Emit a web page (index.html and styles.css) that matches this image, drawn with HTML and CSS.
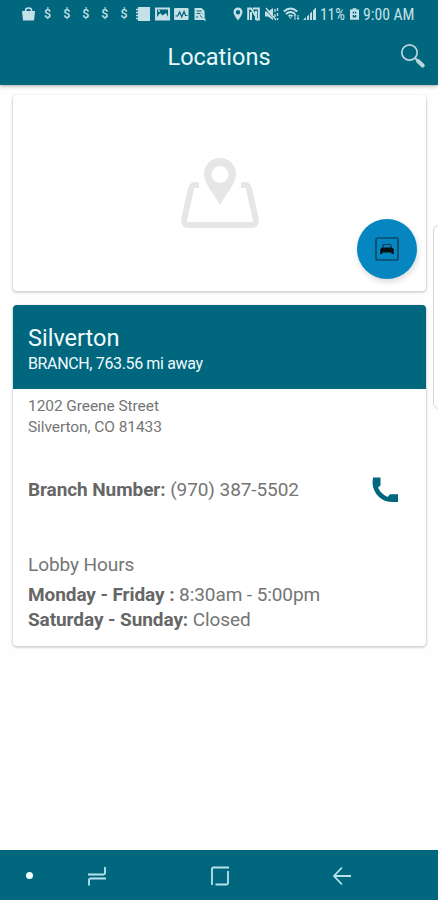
FILE: index.html
```html
<!DOCTYPE html>
<html lang="en">
<head>
    <meta charset="UTF-8">
    <meta name="viewport" content="width=device-width, initial-scale=1.0">
    <title>Locations</title>
    <link rel="stylesheet" href="styles.css">
</head>
<body>
    <header class="top">
        <div class="status-bar">
            <div class="notifications">
                <svg viewBox="0 0 19 16"><path d="M3 5h13l-1 9.500H4z" fill="currentColor"/><path d="M6.500 7V4.500q0-2.500 3-2.500t3 2.500V7" fill="none" stroke="currentColor" stroke-width="1.500"/></svg>
                <span>$</span>
                <span>$</span>
                <span>$</span>
                <span>$</span>
                <span>$</span>
                <svg viewBox="0 0 19 16"><path d="M4 1h12v14H4z" fill="currentColor"/><path d="M2 3.500h4M2 6.500h4M2 9.500h4M2 12.500h4" stroke="currentColor" stroke-width="1.300"/></svg>
                <svg viewBox="0 0 19 16"><rect x="3" y="2.500" width="13" height="11" fill="none" stroke="currentColor" stroke-width="2"/><path d="M4 11l3-4 2.500 2.500L13 7l2 4v2H4z" fill="currentColor"/><circle cx="6" cy="5" r="1" fill="currentColor"/></svg>
                <svg viewBox="0 0 19 16"><rect x="2" y="2" width="14.500" height="12" rx="1" fill="currentColor"/><path d="M3.500 10h2l2.200-4 2 5 2.300-5.500 1.500 4h2" fill="none" stroke="#00677f" stroke-width="1.200"/></svg>
                <svg viewBox="0 0 19 16"><path d="M3.500 2h7l3 3v9h-10z" fill="currentColor"/><path d="M5.500 5h5M5.500 7.500h6M6 10v2M8.500 9l4 4" stroke="#00677f" stroke-width="1"/><circle cx="10.500" cy="10" r="2.500" fill="none" stroke="currentColor"/><path d="M12 12l2.500 2.500" stroke="currentColor" stroke-width="1.500"/></svg>
            </div>
            <div class="system">
                <svg width="10" viewBox="0 0 10 16"><path fill="currentColor" fill-rule="evenodd" d="M5 1.500a4.500 4.500 0 0 0-4.500 4.500C.5 9 5 14.500 5 14.500S9.500 9 9.500 6A4.500 4.500 0 0 0 5 1.500zM5 4a2.200 2.200 0 1 1 0 4.400A2.200 2.200 0 0 1 5 4z"/></svg>
                <svg width="13" viewBox="0 0 13 16"><path d="M1.200 14V2.500h3L9 10.500V5M4 6v8M9 11v3M6 2.500h5.800V13.500H9" fill="none" stroke="currentColor" stroke-width="2"/></svg>
                <svg width="15" viewBox="0 0 15 16"><path d="M1 5.500h3L9 2v12l-5-3.500H1z" fill="currentColor"/><path d="M1 3.500l10 10" stroke="#00677f" stroke-width="1"/><path d="M2 2l10 12M11 3v3M11 8v3M13.500 2v3M13.500 7v3M13.500 12v2" stroke="currentColor" stroke-width="1.300"/></svg>
                <svg class="wifi" width="17" viewBox="0 0 17 16"><path d="M.8 5.500Q7.500-.5 14.200 5.500M3 8q4.500-4 9 0M5.500 10.300q2-1.800 4 0" fill="none" stroke="currentColor" stroke-width="1.800"/><path d="M6 11.500h3L7.500 13zM10.500 9.500l1.500-2 1.500 2zM13.500 12h3L15 14z" fill="currentColor"/><path d="M12 9v5M15 9v4" stroke="currentColor"/></svg>
                <svg class="signal" width="13" viewBox="0 0 13 16"><path d="M0 14l3-3v3zM4 10.500L6 8.500V14H4zM7 7.500l2-2V14H7zM10 4.500l3-3V14h-3z" fill="currentColor"/></svg>
                <span class="percent">11%</span>
                <svg class="battery" width="9" viewBox="0 0 10 16"><path d="M3 1.500h4V3h3v11.500H0V3h3z" fill="currentColor"/><path d="M3 5.500h4v2H3zM3 9h4v3H3z" fill="#00677f"/><path d="M5 6v4" stroke="currentColor"/></svg>
                <span class="time">9:00 AM</span>
            </div>
        </div>
        <div class="title-bar">
            <h1>Locations</h1>
            <svg class="search" viewBox="0 0 26 26"><circle cx="9.500" cy="9.500" r="7.700" fill="none" stroke="#b9d6dd" stroke-width="1.700"/><path d="M15 15l2.500 2.500" stroke="#b9d6dd" stroke-width="2"/><path d="M18 18l4.700 4.500" stroke="#b9d6dd" stroke-width="4" stroke-linecap="round"/></svg>
        </div>
    </header>

    <main>
        <section class="card map">
            <svg class="map-icon" viewBox="0 0 80 72"><path d="M19 27h-4q-3 0-4 4L4.500 60q-1.500 7 4 7h63q5.500 0 4-7L69 31q-1-4-4-4h-4" fill="none" stroke="#e6e6e6" stroke-width="6"/><path fill="#e6e6e6" fill-rule="evenodd" d="M40 0C31 0 24 7 24 16c0 9 9 19 16 31 7-12 16-22 16-31C56 7 49 0 40 0zm0 8a8.500 8.500 0 1 1 0 17 8.500 8.500 0 0 1 0-17z"/></svg>
            <button class="drive" aria-label="Directions">
                <svg viewBox="0 0 24 24"><rect x="1" y="1" width="22" height="22" rx="2" fill="none" stroke="#0d4a68" stroke-width="1.700"/><path d="M7.500 11.500L8.500 7.500h7l1 4" fill="none" stroke="#143a4c" stroke-width="1.200"/><path fill="#0a0f12" d="M7 10.500h10l1.800 2V17H16.500v-1.500h-9V17H5.200v-4.500z"/></svg>
            </button>
        </section>

        <section class="card branch">
            <div class="branch-header">
                <h2>Silverton</h2>
                <p>BRANCH, 763.56 mi away</p>
            </div>
            <div class="branch-body">
                <address>1202 Greene Street<br>Silverton, CO 81433</address>
                <div class="phone">
                    <p><b class="number-label">Branch Number:</b> <span class="number">(970) 387-5502</span></p>
                    <svg viewBox="0 0 26 26"><path fill="#00677f" d="M1 .5h7.500v8L6 10.500Q9 17 15.500 20l2.500-2.800h8V25h-5Q12 25 6.500 19.500T.5 6z"/></svg>
                </div>
                <h3>Lobby Hours</h3>
                <p class="hours"><b class="weekdays">Monday - Friday :</b> <span>8:30am - 5:00pm</span></p>
                <p class="hours"><b class="weekend">Saturday - Sunday:</b> <span>Closed</span></p>
            </div>
        </section>
    </main>

    <div class="edge-panel"></div>

    <nav class="nav-bar">
        <span class="dot"></span>
        <svg viewBox="0 0 20 20"><path d="M1 8.500h15.500q1.500 0 1.500-1.500V1M19 12.500H3.500Q2 12.500 2 14v5.500" fill="none" stroke="currentColor" stroke-width="1.800"/></svg>
        <svg viewBox="0 0 20 20"><path d="M2 19V3q0-1.500 1.500-1.500H19M5.500 18.500h11q1.500 0 1.500-1.500V5" fill="none" stroke="currentColor" stroke-width="1.800"/></svg>
        <svg viewBox="0 0 20 20"><path d="M19 10H2M10 1.500L2 10l8 8.500" fill="none" stroke="currentColor" stroke-width="1.800"/></svg>
    </nav>
</body>
</html>
```
FILE: styles.css
```css
* {
    box-sizing: border-box;
}
body {
    font-family: Roboto, sans-serif;
    background-color: #fefefe;
    color: #757575;
    margin: 0;
    height: 900px;
    display: flex;
    flex-direction: column;
    overflow: hidden;
    position: relative;
}
h1, h2, h3, p {
    margin: 0;
    font-weight: normal;
    white-space: nowrap;
}
svg {
    display: block;
    flex: none;
}
.top {
    background-color: #00677f;
    height: 85px;
    box-shadow: 0 1px 4px rgba(0,0,0,0.35);
}
.status-bar {
    display: flex;
    height: 28px;
    align-items: center;
    color: #c5e0e6;
    padding-left: 19px;
}
.notifications {
    display: flex;
    align-items: center;
    width: 214px;
}
.notifications svg, .notifications span {
    width: 19.100px;
    height: 16px;
    flex: none;
    line-height: 16px;
    font-size: 12.500px;
    font-weight: 500;
    text-align: center;
}
.system {
    display: flex;
    align-items: center;
    gap: 4px;
    font-size: 16px;
    white-space: nowrap;
}
.system svg {
    height: 16px;
}
.system .signal {
    margin-left: -1px;
}
.percent, .time {
    display: block;
    font-family: "Roboto Condensed", Roboto, sans-serif;
    transform-origin: left center;
}
.percent {
    width: 26px;
    transform: scaleX(0.96);
}
.time {
    width: 52px;
    transform: scaleX(0.98);
}
.title-bar {
    display: grid;
    grid-template-columns: 1fr auto 1fr;
    align-items: center;
    height: 57px;
    padding-right: 12px;
}
.title-bar h1 {
    grid-column: 2;
    font-size: 23.5px;
    color: #e8f8fb;
    margin-left: 12px;
}
.search {
    width: 26px;
    height: 26px;
    justify-self: end;
    margin-bottom: 2px;
}
main {
    flex: 1;
    padding: 10px 12px 0 13px;
}
.card {
    background-color: #fff;
    border-radius: 4px;
    box-shadow: 0 1px 2px 1px rgba(0,0,0,0.16);
}
.map {
    height: 196px;
    position: relative;
    padding-top: 63px;
}
.map-icon {
    width: 80px;
    height: 72px;
    margin: 0 auto;
}
.drive {
    position: absolute;
    right: 9px;
    bottom: 12px;
    width: 60px;
    height: 60px;
    padding: 0;
    border: none;
    border-radius: 50%;
    background-color: #0586c1;
    box-shadow: 1px 3px 6px rgba(0,0,0,0.15);
    display: flex;
    align-items: center;
    justify-content: center;
}
.drive svg {
    width: 24px;
    height: 24px;
}
.branch {
    margin-top: 14px;
    height: 341px;
    overflow: hidden;
}
.branch-header {
    background-color: #00677f;
    color: #f0fafc;
    height: 84px;
    padding: 19px 15px 0;
}
.branch-header h2 {
    font-size: 23.5px;
    line-height: 28px;
}
.branch-header p {
    font-size: 16px;
    line-height: 24px;
    letter-spacing: -0.36px;
}
.branch-body {
    padding: 7px 28px 0 15px;
    font-size: 19px;
    letter-spacing: -0.08px;
}
address {
    font-style: normal;
    font-size: 15.500px;
    line-height: 20.500px;
}
.phone {
    display: flex;
    align-items: center;
    justify-content: space-between;
    margin-top: 39px;
    height: 27px;
}
.phone svg {
    width: 26px;
    height: 26px;
}
.branch-body b {
    font-weight: 700;
    color: #666;
}
h3 {
    font-size: 19px;
    line-height: 24px;
    margin-top: 50px;
    margin-bottom: 5px;
}
.hours {
    line-height: 25px;
}
.edge-panel {
    position: absolute;
    right: -8px;
    top: 225px;
    width: 13px;
    height: 184px;
    border: 1px solid #d5d5d5;
    border-radius: 6px;
    background-color: #fff;
}
.nav-bar {
    position: relative;
    display: grid;
    grid-template-columns: 58px 78px 168px 76px;
    justify-items: center;
    align-items: center;
    height: 50px;
    padding-top: 1px;
    background-color: #00677f;
    color: #b9e3eb;
}
.nav-bar svg {
    width: 20px;
    height: 20px;
}
.dot {
    width: 7px;
    height: 7px;
    border-radius: 50%;
    background-color: #f2ffff;
}
```
